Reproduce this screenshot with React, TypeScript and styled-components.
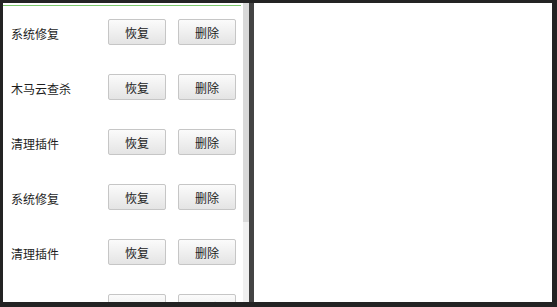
import React from 'react';
import styled, { createGlobalStyle } from 'styled-components';

const GlobalStyle = createGlobalStyle`
    html, body {
        margin: 0;
        padding: 0;
        background-color: #232323;
        font-family: "Noto Sans CJK SC", "Noto Sans", sans-serif;
    }
`;

const Frame = styled.div`
    height: 307px;
    width: 557px;
    box-sizing: border-box;
    padding: 3px 5px 5px 3px;
    display: flex;
`;

const ListPane = styled.div`
    width: 240px;
    height: 100%;
    background-color: #fff;
    overflow: hidden;
    flex-shrink: 0;
`;

const ScrollTrack = styled.div`
    width: 6px;
    flex-shrink: 0;
    background-color: #f0f0f0;
    display: flex;
    flex-direction: column;
`;

const ScrollThumb = styled.div`
    background-color: #d9d9d9;
`;

const TopLine = styled.div`
    margin: 2px 2px 0 0;
    height: 1px;
    background-color: #7cc66c;
`;

const Rows = styled.div`
    padding: 13px 0 7px 0;
`;

const Row = styled.div`
    height: 55px;
    display: flex;
    align-items: flex-start;
    padding-left: 8px;
    box-sizing: border-box;
`;

const Label = styled.span`
    width: 97px;
    padding-top: 7px;
    font-size: 12px;
    line-height: 16px;
    color: #1e1e1e;
`;

const ActionButton = styled.button<{ $gap?: number }>`
    width: 58px;
    height: 26px;
    margin-left: ${({ $gap }) => $gap ?? 0}px;
    padding: 0;
    border: 1px solid #c6c6c6;
    border-radius: 2px;
    background: linear-gradient(#fbfbfb, #e4e4e4);
    font-family: inherit;
    font-size: 12px;
    color: #222;
    cursor: pointer;
`;

const Splitter = styled.div`
    width: 5px;
    flex-shrink: 0;
    background-color: #444;
`;

const DetailPane = styled.div`
    flex: 1;
    background-color: #fff;
`;

const items = ['系统修复', '木马云查杀', '清理插件', '系统修复', '清理插件', '木马云查杀', '系统修复'];

// visible part of the list against its full height
const visibleRatio = 299 / 408;

const App = () => {
    return (
        <>
            <GlobalStyle />
            <Frame>
                <ListPane>
                    <TopLine />
                    <Rows>
                        {
                            items.map((name, index) => (
                                <Row key={index}>
                                    <Label>{name}</Label>
                                    <ActionButton>恢复</ActionButton>
                                    <ActionButton $gap={12}>删除</ActionButton>
                                </Row>
                            ))
                        }
                    </Rows>
                </ListPane>
                <ScrollTrack>
                    <ScrollThumb style={{ height: `${visibleRatio * 100}%` }} />
                </ScrollTrack>
                <Splitter />
                <DetailPane />
            </Frame>
        </>
    );
};

export default App;
